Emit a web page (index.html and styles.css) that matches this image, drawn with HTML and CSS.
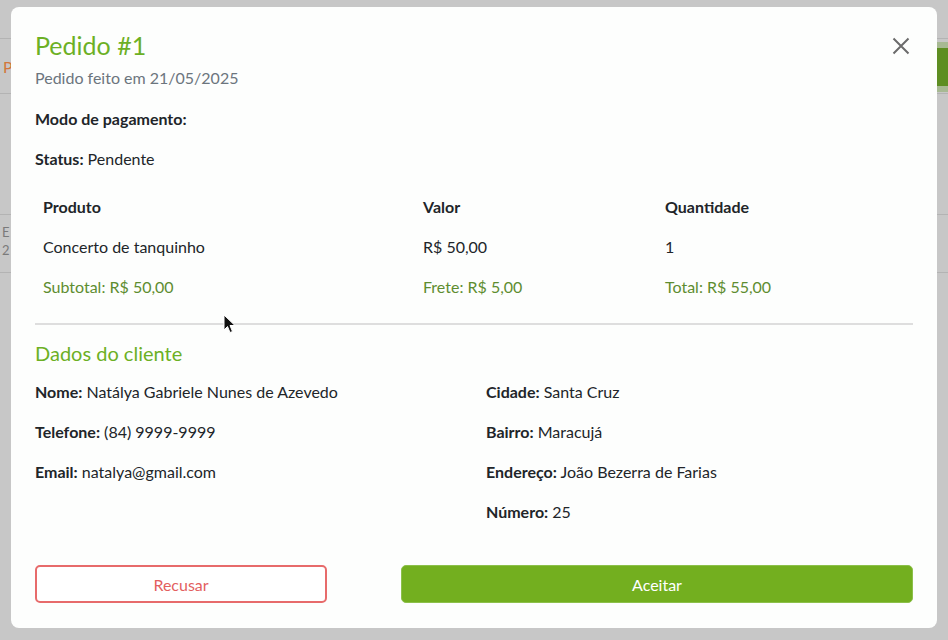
FILE: index.html
```html
<!DOCTYPE html>
<html lang="pt-BR">
<head>
<meta charset="utf-8">
<title>Pedido #1</title>
<link rel="stylesheet" href="styles.css">
</head>
<body>
<div class="backdrop-page">
  <div class="bg-bar">
    <span class="bg-tab">P</span>
    <span class="bg-btn"></span>
  </div>
  <div class="bg-row">
    <span class="bg-cell">E<br>2</span>
  </div>
</div>

<div class="modal" role="dialog">
  <div class="modal-header">
    <h2 class="modal-title">Pedido #1</h2>
    <button class="close" aria-label="Fechar">
      <svg width="18" height="18" viewBox="0 0 18 18"><path d="M1.5 1.5 L16.5 16.5 M16.5 1.5 L1.5 16.5" stroke="#6b6b6b" stroke-width="2" fill="none" stroke-linecap="butt"/></svg>
    </button>
  </div>
  <p class="subtitle">Pedido feito em 21/05/2025</p>
  <p class="line"><b>Modo de pagamento:</b></p>
  <p class="line"><b>Status:</b> Pendente</p>

  <table class="items">
    <colgroup><col class="c1"><col class="c2"><col class="c3"></colgroup>
    <thead>
      <tr><th>Produto</th><th>Valor</th><th>Quantidade</th></tr>
    </thead>
    <tbody>
      <tr><td>Concerto de tanquinho</td><td>R$ 50,00</td><td>1</td></tr>
      <tr class="totals"><td>Subtotal: R$ 50,00</td><td>Frete: R$ 5,00</td><td>Total: R$ 55,00</td></tr>
    </tbody>
  </table>

  <hr class="divider">

  <h3 class="section-title">Dados do cliente</h3>
  <div class="client">
    <div class="client-col">
      <p class="line"><b>Nome:</b> Natálya Gabriele Nunes de Azevedo</p>
      <p class="line"><b>Telefone:</b> (84) 9999-9999</p>
      <p class="line"><b>Email:</b> natalya@gmail.com</p>
    </div>
    <div class="client-col">
      <p class="line"><b>Cidade:</b> Santa Cruz</p>
      <p class="line"><b>Bairro:</b> Maracujá</p>
      <p class="line"><b>Endereço:</b> João Bezerra de Farias</p>
      <p class="line"><b>Número:</b> 25</p>
    </div>
  </div>

  <div class="actions">
    <button class="btn btn-refuse">Recusar</button>
    <button class="btn btn-accept">Aceitar</button>
  </div>

  <svg class="cursor" width="14" height="20" viewBox="0 0 14 20"><path d="M1 1 L1 16 L4.5 12.5 L7 18.5 L9.5 17.5 L7 11.5 L12 11.5 Z" fill="#111" stroke="#fff" stroke-width="1"/></svg>
</div>
</body>
</html>
```

FILE: styles.css
```css
* { box-sizing: border-box; }
html, body { margin: 0; padding: 0; }
body {
  width: 948px;
  height: 640px;
  overflow: hidden;
  background: #c7c7c7;
  font-family: Lato, "Noto Sans", sans-serif;
  font-size: 16px;
  color: #212529;
}

/* page behind the overlay */
.backdrop-page { padding-top: 38px; }
.bg-bar {
  height: 56px;
  border-top: 1px solid #b3b3b3;
  border-bottom: 1px solid #b3b3b3;
  display: flex;
  justify-content: space-between;
  align-items: center;
}
.bg-tab { color: #d2763a; font-size: 16px; padding-left: 3px; }
.bg-btn {
  width: 14px;
  height: 50px;
  background: #5e8e22;
  border-top: 6px solid #a7b993;
  border-bottom: 6px solid #a7b993;
  margin-top: 2px;
}
.bg-row {
  margin-top: 120px;
  height: 59px;
  border-top: 1px solid #b3b3b3;
  border-bottom: 1px solid #b3b3b3;
}
.bg-cell {
  display: block;
  color: #7a7a7a;
  font-size: 13px;
  line-height: 18px;
  padding: 8px 0 0 2px;
}

/* modal overlay */
.modal {
  position: fixed;
  top: 7px;
  left: 11px;
  width: 926px;
  height: 621px;
  background: #fdfefd;
  border-radius: 8px;
  padding: 24px 24px 24px 24px;
}
.modal-header {
  display: flex;
  justify-content: space-between;
  align-items: flex-start;
}
.modal-title {
  margin: 0;
  padding-top: 0;
  font-size: 25px;
  line-height: 29px;
  font-weight: 400;
  color: #6cb024;
}
.close {
  border: 0;
  background: none;
  padding: 0;
  margin: 6px 3px 0 0;
  width: 18px;
  height: 18px;
  cursor: pointer;
}
.close svg { display: block; }

.subtitle {
  margin: 6px 0 17px;
  line-height: 24px;
  color: #6c757d;
}
.line {
  margin: 0 0 16px;
  line-height: 24px;
}
b { font-weight: 700; }

.items {
  width: 878px;
  border-collapse: collapse;
  table-layout: fixed;
}
.c1 { width: 380px; }
.c2 { width: 242px; }
.c3 { width: 256px; }
.items th, .items td {
  text-align: left;
  padding: 8px;
  line-height: 24px;
  font-size: 16px;
}
.items th { font-weight: 700; }
.items .totals td { color: #5e8d30; }

.divider {
  margin: 16px 0 0;
  border: 0;
  border-top: 2px solid #dedede;
}
.section-title {
  margin: 16px 0 15px;
  font-size: 20px;
  line-height: 24px;
  font-weight: 400;
  color: #6cb024;
}
.client {
  display: grid;
  grid-template-columns: 1fr 1fr;
  column-gap: 24px;
}
.actions {
  margin-top: 25px;
  display: grid;
  grid-template-columns: 292px 512px;
  column-gap: 74px;
}
.btn {
  height: 38px;
  border-radius: 5px;
  font-family: inherit;
  font-size: 16px;
  cursor: pointer;
}
.btn-refuse {
  background: #fff;
  border: 2px solid #e76b6b;
  color: #e35f5f;
}
.btn-accept {
  background: #73af1f;
  border: 1px solid #8cc04a;
  color: #fff;
}
.cursor {
  position: absolute;
  left: 212px;
  top: 307px;
}
```
